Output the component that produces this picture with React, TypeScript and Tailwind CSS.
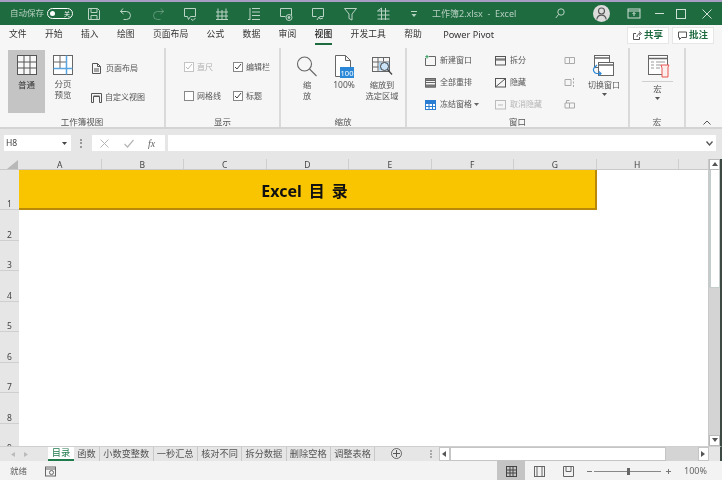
import React from "react";

function TbIcon({ children, w = 14 }: { children: React.ReactNode; w?: number }) {
  return (
    <svg width={w} height="14" viewBox="0 0 14 14" fill="none" stroke="#b9d3c4" strokeWidth="1" className="shrink-0">
      {children}
    </svg>
  );
}

function TitleBar() {
  return (
    <div className="h-[25px] bg-[#1f6b40] flex items-center text-[#b5cfc0] text-[8.5px] border-t-2 border-[#a99cc4]">
      <span className="ml-[10px] w-[33px] whitespace-nowrap">自动保存</span>
      <div className="ml-[4px] w-[26px] h-[11px] rounded-full border border-white flex items-center px-[2px] justify-between">
        <span className="w-[5px] h-[5px] rounded-full bg-white" />
        <span className="text-[6px] text-white leading-none">关</span>
      </div>
      <div className="ml-[14px] flex items-center gap-[18px]">
        <TbIcon><path d="M1.5 1.5h9l2 2v9h-11zM4 1.5v4h6v-4M4 12.5v-4h6v4" /></TbIcon>
        <TbIcon><path d="M4 1.5 1.5 4.5 4.5 7M1.5 4.5h6a4 4 0 0 1 0 8h-3" /></TbIcon>
        <TbIcon><g opacity="0.4"><path d="M10 1.5l2.5 3L9.5 7M12.5 4.5h-6a4 4 0 0 0 0 8h3" /></g></TbIcon>
        <TbIcon><path d="M1.5 1.5h11v8h-5l-2 3-1-3h-3zM8 12l2 1.5L12.5 11" /></TbIcon>
        <TbIcon><path d="M1 5h12M1 9h12M3 1.5v11M7 3v9.5M11 1.5v11M1 12.5h12" /></TbIcon>
        <TbIcon><path d="M5 1.5h8M5 5h8M5 8.5h8M5 12.5h8M3 1v12M1 12.5h2" /></TbIcon>
        <TbIcon><path d="M1.5 1.5h11v7M1.5 1.5v8h5" /><circle cx="10" cy="10.5" r="3" /><circle cx="10" cy="10.5" r="1" fill="#b9d3c4" /></TbIcon>
        <TbIcon><path d="M1.5 1.5h11v8h-4M1.5 1.5v8h4" /><path d="M6 13l2-3 1 2 3-1" /></TbIcon>
        <TbIcon w={15}><path d="M1 1.5h12L8.5 7v6l-3-1.5V7z" /></TbIcon>
        <TbIcon w={15}><path d="M5 1v12M1 4h12M1 8h12M1 12h12M9 1v12M1 4l4-3" /></TbIcon>
      </div>
      <svg width="8" height="8" viewBox="0 0 8 8" className="ml-[19px]" fill="#b9d3c4">
        <path d="M1 1h6v1H1zM1.5 4h5L4 7z" />
      </svg>
      <span className="ml-[14px] w-[80px] text-[9px] whitespace-nowrap">工作簿2.xlsx&nbsp; -&nbsp; Excel</span>
      <svg width="10" height="11" viewBox="0 0 10 11" fill="none" stroke="#b9d3c4" className="ml-[43px]">
        <circle cx="6" cy="4" r="3.2" />
        <path d="M3.6 6.4 .8 10" />
      </svg>
      <div className="ml-[28px] w-[17px] h-[17px] rounded-full bg-[#dcdcdc] flex items-center justify-center shrink-0">
        <svg width="11" height="13" viewBox="0 0 11 13" fill="none" stroke="#555" strokeWidth="1.1">
          <circle cx="5.5" cy="4" r="3" />
          <path d="M.8 12.5c.4-3 2-4.4 4.7-4.4s4.3 1.4 4.7 4.4" />
        </svg>
      </div>
      <svg width="14" height="11" viewBox="0 0 14 11" fill="none" stroke="#cfe0d6" className="ml-[17px] shrink-0">
        <rect x="1" y="1" width="12" height="9" />
        <path d="M1 3h12M7 8V4.5M5.5 6 7 4.5 8.5 6" />
      </svg>
      <svg width="9" height="9" viewBox="0 0 9 9" stroke="#cfe0d6" className="ml-[14px] shrink-0"><path d="M0 4.5h9" /></svg>
      <svg width="10" height="10" viewBox="0 0 10 10" fill="none" stroke="#cfe0d6" className="ml-[12px] shrink-0"><rect x=".5" y=".5" width="9" height="9" /></svg>
      <svg width="10" height="10" viewBox="0 0 10 10" fill="none" stroke="#cfe0d6" className="ml-[16px] shrink-0"><path d="M.5.5l9 9M9.5.5l-9 9" /></svg>
    </div>
  );
}

function MenuBar() {
  const items = ["文件", "开始", "插入", "绘图", "页面布局", "公式", "数据", "审阅"];
  return (
    <div className="h-[20px] bg-[#f6f6f6] flex items-center text-[8.8px] text-[#333] pl-[9px] pr-[8px]">
      <div className="flex gap-[18.4px] items-center">
        {items.map((t) => (
          <span key={t} className="whitespace-nowrap">{t}</span>
        ))}
        <span className="relative whitespace-nowrap font-medium text-[#222]">
          视图
          <span className="absolute left-0 right-0 top-[15px] h-[2px] bg-[#1f6b40]" />
        </span>
        <span className="whitespace-nowrap">开发工具</span>
        <span className="whitespace-nowrap">帮助</span>
        <span className="ml-[3px] text-[9.2px] whitespace-nowrap">Power Pivot</span>
      </div>
      <div className="ml-auto w-[42px] h-[17px] bg-white border border-[#e6e6e6] flex items-center justify-center gap-[2px] text-[#1f6b40] font-bold text-[9.5px] shrink-0">
        <svg width="9" height="9" viewBox="0 0 9 9" fill="none" stroke="#555"><path d="M3 2.5H.5v6h6V6M4 6c0-2 1.5-3.5 3-3.5M6 .5l2.5 2L6 4.5" /></svg>
        共享
      </div>
      <div className="ml-[3px] w-[42px] h-[17px] bg-white border border-[#e6e6e6] flex items-center justify-center gap-[2px] text-[#1f6b40] font-bold text-[9.5px] shrink-0">
        <svg width="9" height="9" viewBox="0 0 9 9" fill="none" stroke="#555"><path d="M.5 1h8v5.5H3.500L1.5 8.5v-2h-1z" /></svg>
        批注
      </div>
    </div>
  );
}

function Group({ w, label, children }: { w: string; label: string; children: React.ReactNode }) {
  return (
    <div className={`${w} h-full shrink-0 flex flex-col border-r-2 border-[#dadada]`}>
      <div className="flex-1 min-h-0 flex">{children}</div>
      <div className="h-[10px] text-center text-[8.5px] leading-[10px] text-[#555] whitespace-nowrap">{label}</div>
    </div>
  );
}

function Check({ on, dim }: { on?: boolean; dim?: boolean }) {
  return (
    <span className={`w-[10px] h-[10px] border bg-white flex items-center justify-center shrink-0 ${dim ? "border-[#c4c4c4]" : "border-[#888]"}`}>
      {on && (
        <svg width="8" height="8" viewBox="0 0 8 8" fill="none" stroke={dim ? "#bbb" : "#444"}>
          <path d="M1 4l2 2 4-5" />
        </svg>
      )}
    </span>
  );
}

function CheckRow({ t, on, dim }: { t: string; on?: boolean; dim?: boolean }) {
  return (
    <div className={`flex items-center gap-[3px] text-[8px] ${dim ? "text-[#b0b0b0]" : "text-[#555]"}`}>
      <Check on={on} dim={dim} />
      <span className="whitespace-nowrap">{t}</span>
    </div>
  );
}

function SmallRow({ icon, t, dim }: { icon: React.ReactNode; t: React.ReactNode; dim?: boolean }) {
  return (
    <div className={`h-[22px] shrink-0 flex items-center gap-[4px] text-[8px] whitespace-nowrap ${dim ? "text-[#b5b5b5]" : "text-[#555]"}`}>
      <span className="w-[11px] flex justify-center">{icon}</span>
      {t}
    </div>
  );
}

function Win({ d, c = "#666", extra }: { d: string; c?: string; extra?: React.ReactNode }) {
  return (
    <svg width="11" height="11" viewBox="0 0 11 11" fill="none" stroke={c}>
      <rect x=".5" y="1.5" width="10" height="8.5" />
      <path d={d} />
      {extra}
    </svg>
  );
}

function Ribbon() {
  return (
    <div className="h-[84px] bg-[#f6f6f6] flex pt-[3px] border-b-[2px] border-[#d4d4d4]">
      <Group w="w-[166px]" label="工作簿视图">
        <div className="ml-[8px] mt-[2px] w-[37px] h-[63px] bg-[#c4c4c4] flex flex-col items-center pt-[5px] text-[8.5px] text-[#333]">
          <svg width="20" height="20" viewBox="0 0 20 20" fill="#f8f8f8" stroke="#555">
            <rect x=".5" y=".5" width="19" height="19" />
            <path d="M7 .5v19M13 .5v19M.5 7h19M.5 13h19" />
          </svg>
          <span className="mt-[4px]">普通</span>
        </div>
        <div className="ml-[3px] mt-[7px] w-[30px] flex flex-col items-center text-[8.5px] leading-[11px] text-[#555]">
          <svg width="20" height="20" viewBox="0 0 20 20" fill="#fff" stroke="#666">
            <rect x=".5" y=".5" width="19" height="19" />
            <path d="M7 .5v13M.5 7h13" />
            <path d="M13.5.5v19M.5 13.5h19" stroke="#5aa5e0" strokeWidth="1.5" />
          </svg>
          <span className="mt-[3px]">分页</span>
          <span>预览</span>
        </div>
        <div className="ml-[14px] mt-[9px] flex flex-col gap-[7px] text-[8px] text-[#555]">
          <div className="h-[22px] flex items-center gap-[5px] whitespace-nowrap">
            <svg width="9" height="11" viewBox="0 0 9 11" fill="none" stroke="#555">
              <path d="M.5.5h5l3 3v7h-8zM5.5.5v3h3M2 6h5M2 8h5" />
            </svg>
            页面布局
          </div>
          <div className="h-[22px] flex items-center gap-[3px] whitespace-nowrap -ml-[1px]">
            <svg width="11" height="11" viewBox="0 0 11 11" fill="none" stroke="#555">
              <path d="M.5 1.5h10M.5 1.5v9h2v-6h6v6h2v-9M2.5 4h6" />
            </svg>
            自定义视图
          </div>
        </div>
      </Group>
      <Group w="w-[115px]" label="显示">
        <div className="ml-[18px] mt-[13px] grid grid-cols-[49px_50px] gap-y-[17px] content-start">
          <CheckRow t="直尺" on dim />
          <CheckRow t="编辑栏" on />
          <CheckRow t="网格线" />
          <CheckRow t="标题" on />
        </div>
      </Group>
      <Group w="w-[126px]" label="缩放">
        <div className="ml-[15px] mt-[8px] w-[22px] flex flex-col items-center text-[8.2px] leading-[11px] text-[#555]">
          <svg width="22" height="22" viewBox="0 0 22 22" fill="none" stroke="#666" strokeWidth="1.1">
            <circle cx="8.5" cy="8" r="7" />
            <path d="M13.5 13l7 7" />
          </svg>
          <span className="mt-[1px]">缩</span>
          <span>放</span>
        </div>
        <div className="ml-[14px] mt-[7px] w-[24px] flex flex-col items-center text-[8.5px] leading-[11px] text-[#555]">
          <svg width="20" height="23" viewBox="0 0 20 23" fill="#fff" stroke="#666">
            <path d="M1.5.5h10l5 5v16h-15zM11.5.5v5h5" />
            <rect x="6" y="12" width="14" height="11" fill="#2b88d8" stroke="none" />
            <text x="13" y="20.5" fontSize="7.5" fill="#fff" stroke="none" textAnchor="middle">100</text>
          </svg>
          <span className="mt-[1px]">100%</span>
        </div>
        <div className="ml-[7px] mt-[8px] w-[38px] flex flex-col items-center text-[8.2px] leading-[11px] text-[#555] whitespace-nowrap">
          <svg width="21" height="21" viewBox="0 0 21 21" fill="none" stroke="#666">
            <rect x=".5" y="1.5" width="17" height="14" />
            <path d="M.5 6h17M6 1.5v14M11.5 1.5v4M.5 11h6" />
            <rect x="7" y="6.5" width="10" height="8" fill="#a9d3f2" stroke="none" />
            <circle cx="12.5" cy="10.5" r="4" stroke="#444" fill="#fff" fillOpacity="0.4" />
            <path d="M15.5 13.5l4.5 5" stroke="#444" strokeWidth="1.3" />
          </svg>
          <span className="mt-[2px]">缩放到</span>
          <span>选定区域</span>
        </div>
      </Group>
      <Group w="w-[223px]" label="窗口">
        <div className="ml-[18px] mt-[1px] w-[70px] flex flex-col">
          <SmallRow
            t="新建窗口"
            icon={
              <svg width="11" height="11" viewBox="0 0 11 11" fill="none" stroke="#666">
                <path d="M4 1.5h6.5v9H.5V3" />
                <path d="M2 0v3.5M.3 1.7h3.4" stroke="#2e9b5d" />
              </svg>
            }
          />
          <SmallRow t="全部重排" icon={<Win d="M.5 5.5h10" extra={<path d="M.5 1.5h10v2H.5zM.5 8h10v2H.5z" fill="#888" />} />} />
          <SmallRow
            t={<span className="flex items-center gap-[2px]">冻结窗格<svg width="5" height="3" viewBox="0 0 5 3" fill="#666"><path d="M0 0h5L2.5 3z" /></svg></span>}
            icon={
              <svg width="11" height="11" viewBox="0 0 11 11" fill="#fff" stroke="#2b7cd3">
                <rect x=".5" y="1.5" width="10" height="9" />
                <path d="M.5 4.5h10M.5 7.5h10M4 1.5v9M7.5 1.5v9" />
                <rect x=".5" y="1.5" width="10" height="3" fill="#2b7cd3" stroke="none" />
              </svg>
            }
          />
        </div>
        <div className="mt-[1px] w-[62px] flex flex-col">
          <SmallRow t="拆分" icon={<Win d="M.5 4h10M.5 5h10" c="#555" />} />
          <SmallRow t="隐藏" icon={<Win d="M1 9.5 10 2" c="#555" />} />
          <SmallRow t="取消隐藏" dim icon={<Win d="M3 6h5" c="#bbb" />} />
        </div>
        <div className="ml-[7px] mt-[1px] w-[22px] flex flex-col">
          {["M.5 2.5h4.5v6H.5zM5 2.5h5v6H5z", "M.5 2.5h6v6h-6zM9 1v2M9 4.5v2M9 8v2", "M.5 4h4.5v5H.5zM5 4h5v5H5zM2 4V1.5h3"].map((d) => (
            <div key={d} className="h-[22px] shrink-0 flex items-center">
              <svg width="12" height="11" viewBox="0 0 11 11" fill="none" stroke="#aaa"><path d={d} /></svg>
            </div>
          ))}
        </div>
        <div className="-ml-[1px] mt-[7px] w-[38px] flex flex-col items-center text-[8px] leading-[11px] text-[#555] whitespace-nowrap">
          <svg width="22" height="24" viewBox="0 0 22 24" fill="none" stroke="#666" className="mr-[3px]">
            <rect x="2.5" y=".5" width="15" height="12" fill="#fff" />
            <path d="M2.5 3h15" strokeWidth="1.5" />
            <rect x="6.5" y="7.5" width="15" height="13" fill="#fff" />
            <path d="M6.5 10h15" strokeWidth="1.5" />
            <path d="M5 10 2 13c-1.5 2 0 5 2.5 5.5H9M7 16.5l2 2-2 2" stroke="#2b88d8" strokeWidth="1.2" />
          </svg>
          <span>切换窗口</span>
          <svg width="5" height="3" viewBox="0 0 5 3" fill="#555" className="mt-[3px]"><path d="M0 0h5L2.5 3z" /></svg>
        </div>
      </Group>
      <Group w="w-[56px]" label="宏">
        <div className="ml-[4px] w-[47px] flex flex-col items-center text-[8.5px] leading-[11px] text-[#555]">
          <svg width="22" height="23" viewBox="0 0 22 23" fill="none" stroke="#666" className="mt-[7px] ml-[2px]">
            <rect x=".5" y=".5" width="19" height="19" fill="#fff" />
            <path d="M.5 3.5h19" strokeWidth="1.5" />
            <path d="M3 7h3M8 7h9M3 10h3M8 10h5M3 13h3M8 13h4" stroke="#999" />
            <path d="M13 10h8l-1 2v10h-6V13z" stroke="#e8544f" fill="#fdeeee" />
          </svg>
          <span className="w-[31px] h-px bg-[#d0d0d0] mt-[3px]" />
          <span className="mt-[1px]">宏</span>
          <svg width="5" height="3" viewBox="0 0 5 3" fill="#555" className="mt-[3px]"><path d="M0 0h5L2.5 3z" /></svg>
        </div>
      </Group>
      <div className="flex-1 flex items-end justify-end pr-[11px] pb-[2px]">
        <svg width="8" height="5" viewBox="0 0 8 5" fill="none" stroke="#555"><path d="M.5 4.5 4 1l3.5 3.5" /></svg>
      </div>
    </div>
  );
}

function FormulaBar() {
  return (
    <div className="h-[30px] bg-[#e6e6e6] flex items-start pt-[6px]">
      <div className="ml-[4px] w-[67px] h-[16px] bg-white flex items-center justify-between pl-[2px] pr-[4px] text-[8.5px] text-[#444]">
        H8
        <svg width="5" height="3" viewBox="0 0 5 3" fill="#444"><path d="M0 0h5L2.5 3z" /></svg>
      </div>
      <span className="ml-[9px] w-[2px] h-[9px] mt-[4px] border-l-2 border-dotted border-[#999]" />
      <div className="ml-[10px] w-[73px] h-[16px] bg-white flex items-center text-[#aaa]">
        <svg width="9" height="9" viewBox="0 0 9 9" fill="none" stroke="#b5b5b5" className="ml-[8px]"><path d="M.5.5l8 8M8.5.5l-8 8" /></svg>
        <svg width="10" height="9" viewBox="0 0 10 9" fill="none" stroke="#b5b5b5" strokeWidth="1.2" className="ml-[15px]"><path d="M.5 5l3 3L9.5 1" /></svg>
        <span className="ml-[14px] text-[10px] italic text-[#666] font-['Liberation_Serif',serif]">fx</span>
      </div>
      <div className="ml-[3px] w-[548px] h-[16px] bg-white flex items-center justify-end pr-[3px]">
        <svg width="7" height="5" viewBox="0 0 7 5" fill="none" stroke="#555" strokeWidth="1.3"><path d="M.5.5 3.5 4l3-3.5" /></svg>
      </div>
    </div>
  );
}

const cols = ["A", "B", "C", "D", "E", "F", "G", "H"];
const rows = ["2", "3", "4", "5", "6", "7", "8", "9"];

function Arrow({ dir }: { dir: "up" | "down" | "left" | "right" }) {
  const d = { up: "M0 4h6L3 0z", down: "M0 0h6L3 4z", left: "M4 0v6L0 3z", right: "M0 0v6l4-3z" }[dir];
  return (
    <svg width="6" height="6" viewBox="0 0 6 6" fill="#555"><path d={d} /></svg>
  );
}

function Sheet() {
  return (
    <div className="h-[287px] flex relative bg-white border-r-2 border-[#3d4a44]">
      <div className="w-[708px] flex flex-col">
        <div className="h-[11px] flex bg-[#e6e6e6] border-b border-[#c9c9c9] shrink-0">
          <div className="w-[19px] flex items-end justify-end pr-[1px] shrink-0">
            <svg width="11" height="9" viewBox="0 0 11 9" fill="#b8b8b8"><path d="M11 0v9H0z" /></svg>
          </div>
          {cols.map((c) => (
            <div key={c} className="w-[82.5px] shrink-0 border-r border-[#cfcfcf] text-center text-[8.5px] leading-[11px] text-[#444]">{c}</div>
          ))}
        </div>
        <div className="flex flex-1 min-h-0 overflow-hidden">
          <div className="w-[19px] shrink-0 bg-[#e6e6e6] flex flex-col text-[8.5px] leading-[10px] text-[#444]">
            <div className="h-[40px] shrink-0 border-b border-[#cfcfcf] flex items-end justify-center">1</div>
            {rows.map((r) => (
              <div key={r} className="h-[30.5px] shrink-0 border-b border-[#cfcfcf] flex items-end justify-center">{r}</div>
            ))}
          </div>
          <div className="flex-1">
            <div className="w-[578px] h-[40px] bg-[#f8c500] border-b-2 border-r-2 border-[#b98a0a] flex items-center justify-center gap-[7px] pt-[3px] pr-[5px] text-[16px] font-bold text-[#111]">
              <span>Excel</span>
              <span>目</span>
              <span>录</span>
            </div>
          </div>
        </div>
      </div>
      <div className="w-[12px] flex flex-col bg-[#d4d4d4] border-l border-[#c9c9c9]">
        <div className="h-[11px] bg-white border border-[#bbb] flex items-center justify-center shrink-0"><Arrow dir="up" /></div>
        <div className="h-[118px] shrink-0 bg-white border-l-2 border-b border-r border-[#c5cccc]" />
        <div className="flex-1" />
        <div className="h-[11px] bg-white border border-[#bbb] flex items-center justify-center shrink-0"><Arrow dir="down" /></div>
      </div>
    </div>
  );
}

function Tabs() {
  const tabs = ["函数", "小数变整数", "一秒汇总", "核对不同", "拆分数据", "删除空格", "调整表格"];
  return (
    <div className="h-[15px] bg-[#e6e6e6] flex items-stretch text-[9.2px] text-[#555] border-t border-[#cfcfcf] border-r-2 border-r-[#3d4a44]">
      <div className="w-[48px] flex items-center pl-[11px] gap-[9px] shrink-0">
        <svg width="4" height="5" viewBox="0 0 4 5" fill="#bbb"><path d="M4 0v5L0 2.5z" /></svg>
        <svg width="4" height="5" viewBox="0 0 4 5" fill="#bbb"><path d="M0 0v5l4-2.5z" /></svg>
      </div>
      <div className="w-[26px] shrink-0 bg-white border-b-2 border-[#1f7a4c] text-[#1f7a4c] flex items-center justify-center leading-none">目录</div>
      {tabs.map((t) => (
        <div key={t} className="shrink-0 px-[3.3px] border-r border-[#c9c9c9] flex items-center leading-none whitespace-nowrap">{t}</div>
      ))}
      <div className="ml-[16px] mt-[1px] w-[11px] h-[11px] rounded-full border border-[#666] flex items-center justify-center shrink-0">
        <svg width="7" height="7" viewBox="0 0 7 7" stroke="#555"><path d="M3.5 0v7M0 3.5h7" /></svg>
      </div>
      <span className="ml-[28px] mt-[3px] h-[8px] border-l-2 border-dotted border-[#aaa] shrink-0" />
      <div className="ml-[7px] flex-1 flex items-center bg-[#d4d4d4] mr-[11px] min-w-0">
        <div className="w-[11px] h-full bg-white border border-[#c5c5c5] flex items-center justify-center shrink-0"><Arrow dir="left" /></div>
        <div className="w-[216px] h-full bg-white border border-[#c5c5c5] shrink-0" />
        <div className="flex-1" />
        <div className="w-[11px] h-full bg-white border border-[#c5c5c5] flex items-center justify-center shrink-0"><Arrow dir="right" /></div>
      </div>
    </div>
  );
}

function StatusBar() {
  return (
    <div className="h-[20px] bg-[#f3f3f3] flex items-center text-[8.5px] text-[#666]">
      <span className="ml-[10px] w-[35px]">就绪</span>
      <svg width="11" height="11" viewBox="0 0 11 11" fill="none" stroke="#666">
        <rect x=".5" y="1" width="10" height="9" />
        <path d="M.5 3h10" />
        <circle cx="6.5" cy="6.5" r="2" />
      </svg>
      <div className="ml-[441px] w-[28px] h-full bg-[#c4c4c4] flex items-center justify-center shrink-0">
        <svg width="11" height="11" viewBox="0 0 11 11" fill="none" stroke="#444"><rect x=".5" y=".5" width="10" height="10" /><path d="M4 .5v10M7 .5v10M.5 4h10M.5 7h10" /></svg>
      </div>
      <svg width="11" height="11" viewBox="0 0 11 11" fill="none" stroke="#666" className="ml-[9px] shrink-0"><rect x=".5" y=".5" width="10" height="10" /><path d="M3 .5v10M8 .5v10" /></svg>
      <svg width="11" height="11" viewBox="0 0 11 11" fill="none" stroke="#666" className="ml-[18px] shrink-0"><path d="M.5.5h10v10H.5zM3 .5v5h5v-5" /></svg>
      <svg width="5" height="1" viewBox="0 0 5 1" stroke="#777" className="ml-[13px] shrink-0"><path d="M0 .5h5" /></svg>
      <div className="ml-[2px] w-[67px] h-px bg-[#888] relative shrink-0">
        <span className="absolute left-[33px] -top-[3px] w-[3px] h-[7px] bg-[#666]" />
      </div>
      <svg width="5" height="5" viewBox="0 0 5 5" stroke="#777" className="ml-[5px] shrink-0"><path d="M0 2.5h5M2.5 0v5" /></svg>
      <span className="ml-[13px] text-[9px] whitespace-nowrap">100%</span>
    </div>
  );
}

export default function App() {
  return (
    <div className="w-[722px] h-[480px] overflow-hidden bg-white font-['Noto_Sans','Noto_Sans_CJK_SC',sans-serif] blur-[0.4px]">
      <TitleBar />
      <MenuBar />
      <Ribbon />
      <FormulaBar />
      <Sheet />
      <Tabs />
      <StatusBar />
    </div>
  );
}
